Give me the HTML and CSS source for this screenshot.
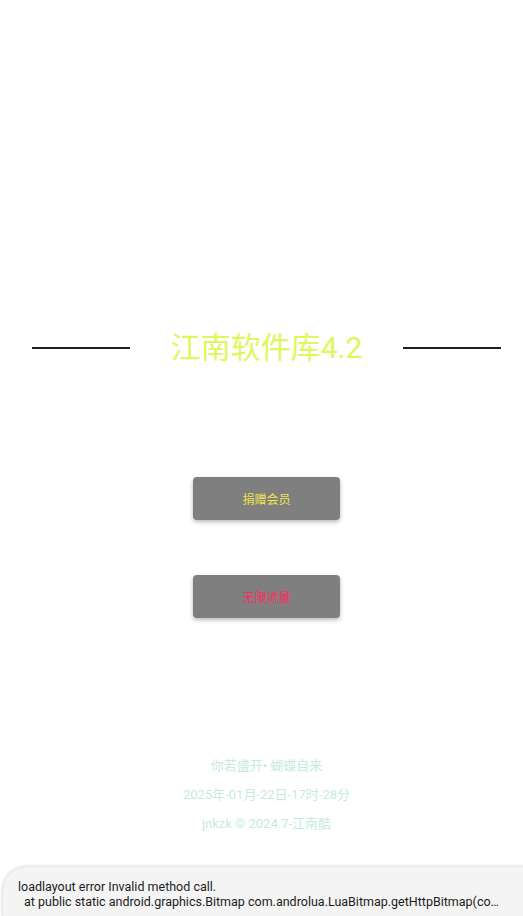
FILE: index.html
```html
<!DOCTYPE html>
<html lang="zh">
<head>
<meta charset="utf-8">
<title>江南软件库4.2</title>
<link rel="stylesheet" href="styles.css">
</head>
<body>
<div class="screen">
  <div class="title-row">
    <div class="rule"></div>
    <div class="title">江南软件库4.2</div>
    <div class="rule"></div>
  </div>
  <div class="buttons">
    <div class="btn btn-donate">捐赠会员</div>
    <div class="btn btn-flow">无限流量</div>
  </div>
  <div class="footer">
    <div class="foot-line">你若盛开• 蝴蝶自来</div>
    <div class="foot-line">2025年-01月-22日-17时-28分</div>
    <div class="foot-line">jnkzk © 2024.7-江南酷</div>
  </div>
  <div class="toast">
    <div class="toast-line">loadlayout error Invalid method call.</div>
    <div class="toast-line toast-indent">at public static android.graphics.Bitmap com.androlua.LuaBitmap.getHttpBitmap(co…</div>
  </div>
</div>
</body>
</html>
```
FILE: styles.css
```css
html, body {
  margin: 0;
  padding: 0;
  background: #ffffff;
}
body {
  font-family: Roboto, "Noto Sans CJK SC", sans-serif;
}
.screen {
  position: relative;
  width: 523px;
  height: 916px;
  overflow: hidden;
  display: flex;
  flex-direction: column;
}
.title-row {
  margin: 328px 22px 0 32px;
  height: 40px;
  display: grid;
  grid-template-columns: 98px 1fr 98px;
  align-items: center;
}
.rule {
  height: 2px;
  background: #1e1e1e;
}
.title {
  text-align: center;
  font-size: 30px;
  line-height: 40px;
  color: #e0f75a;
}
.buttons {
  margin-top: 109px;
  padding-left: 10px;
  display: flex;
  flex-direction: column;
  align-items: center;
  gap: 55px;
}
.btn {
  width: 147px;
  height: 43px;
  border-radius: 4px;
  background: #7f7f7f;
  box-shadow: 0 2px 4px rgba(0, 0, 0, 0.28);
  display: flex;
  align-items: center;
  justify-content: center;
  font-size: 12px;
}
.btn-donate { color: #f2e64c; }
.btn-flow { color: #ff2a5e; }
.footer {
  margin-top: 133px;
  padding-left: 10px;
  display: flex;
  flex-direction: column;
  align-items: center;
}
.foot-line {
  font-size: 13px;
  line-height: 29px;
  color: #c6ebdb;
}
.toast {
  position: absolute;
  left: 3px;
  top: 867px;
  width: 545px;
  height: 70px;
  box-sizing: border-box;
  padding: 12px 0 0 15px;
  border-radius: 24px;
  background: #f4f4f4;
  box-shadow: 0 0 4px rgba(0, 0, 0, 0.22);
}
.toast-line {
  font-size: 12.5px;
  line-height: 15px;
  color: #1c1c1c;
  white-space: nowrap;
}
.toast-indent {
  padding-left: 6px;
}
```
